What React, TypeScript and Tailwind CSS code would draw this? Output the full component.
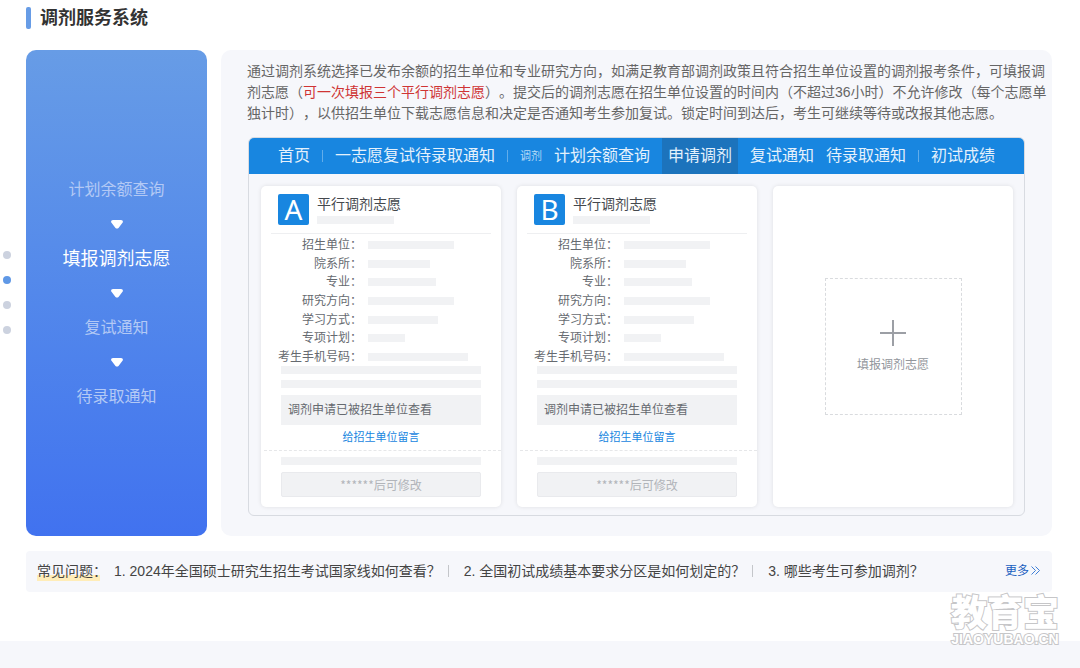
import { Fragment } from 'react';
import clsx from 'clsx';

const steps = ['计划余额查询', '填报调剂志愿', '复试通知', '待录取通知'];

// full-width punctuation
const COLON = '\uff1a';
const COMMA = '\uff0c';
const OPEN = '\uff08';
const CLOSE = '\uff09';
const QUESTION = '\uff1f';

const fields = [
  { label: '招生单位', bar: 'w-[86px]' },
  { label: '院系所', bar: 'w-[62px]' },
  { label: '专业', bar: 'w-[68px]' },
  { label: '研究方向', bar: 'w-[86px]' },
  { label: '学习方式', bar: 'w-[70px]' },
  { label: '专项计划', bar: 'w-[37px]' },
  { label: '考生手机号码', bar: 'w-[100px]' },
];

const questions = [
  `1. 2024年全国硕士研究生招生考试国家线如何查看${QUESTION}`,
  `2. 全国初试成绩基本要求分区是如何划定的${QUESTION}`,
  `3. 哪些考生可参加调剂${QUESTION}`,
];

const introStart = `通过调剂系统选择已发布余额的招生单位和专业研究方向${COMMA}如满足教育部调剂政策且符合招生单位设置的调剂报考条件${COMMA}可填报调剂志愿${OPEN}`;
const introEnd = `${CLOSE}。提交后的调剂志愿在招生单位设置的时间内${OPEN}不超过36小时${CLOSE}不允许修改${OPEN}每个志愿单独计时${CLOSE}${COMMA}以供招生单位下载志愿信息和决定是否通知考生参加复试。锁定时间到达后${COMMA}考生可继续等待或改报其他志愿。`;

function PageDots() {
  return (
    <nav aria-label="分页" className="absolute left-[3px] top-[251px] flex flex-col gap-[17px]">
      {steps.map((step, i) => (
        <button
          key={step}
          type="button"
          aria-label={step}
          className={clsx('size-2 rounded-full', i === 1 ? 'bg-[#5f98e6]' : 'bg-[#ccd2df]')}
        />
      ))}
    </nav>
  );
}

function StepArrow() {
  return (
    <span className="flex h-[35px] items-center">
      <svg width="12" height="9" viewBox="0 0 12 9" fill="#fff" aria-hidden="true">
        <path d="M2 0h8c1.800 0 2.500 1.900 1.300 3.100L7.500 7.900c-.8 .9-2.200 .9-3 0L.7 3.100C-.5 1.900 .2 0 2 0z" />
      </svg>
    </span>
  );
}

function Sidebar() {
  return (
    <aside className="flex w-[181px] shrink-0 flex-col items-center justify-center rounded-[10px] bg-linear-to-b from-[#679ce6] to-[#4172ef]">
      {steps.map((step, i) => (
        <Fragment key={step}>
          {i > 0 && <StepArrow />}
          <a
            href="#"
            className={clsx('leading-[34px]', i === 1 ? 'text-lg text-white' : 'text-base text-[#b3c9f5]')}
          >
            {step}
          </a>
        </Fragment>
      ))}
    </aside>
  );
}

function NavLine() {
  return <span className="h-3 w-px bg-[#62adea]" />;
}

function SystemNav() {
  return (
    <nav className="flex h-9 items-center gap-3 whitespace-nowrap bg-[#1886e0] pl-[29px] text-base text-[#e4f1fc]">
      <a href="#">首页</a>
      <NavLine />
      <a href="#">一志愿复试待录取通知</a>
      <NavLine />
      <span className="text-[11px] text-[#b5d9f6]">调剂</span>
      <a href="#">计划余额查询</a>
      <a href="#" className="flex h-full items-center bg-[#1c73bc] px-[6px]">
        申请调剂
      </a>
      <a href="#">复试通知</a>
      <a href="#">待录取通知</a>
      <NavLine />
      <a href="#">初试成绩</a>
    </nav>
  );
}

function Bar({ className }: { className?: string }) {
  return <div className={clsx('h-2 bg-[#f1f2f4]', className)} />;
}

function WishCard({ letter }: { letter: string }) {
  return (
    <article className="rounded-[5px] bg-white pb-[10px] text-xs text-[#666a70] shadow-[0_0_4px_rgba(0,0,0,0.1)]">
      <header className="mx-[10px] flex h-12 gap-2 border-b border-[#eeeff1] pl-[7px] pt-2">
        <div className="flex size-[31px] items-center justify-center rounded-[2px] bg-[#1886e0] pb-px font-['Noto_Sans',sans-serif] text-[28px] leading-none text-white">
          {letter}
        </div>
        <div>
          <h3 className="text-sm leading-5 text-[#44484d]">平行调剂志愿</h3>
          <Bar className="mt-[2px] w-[77px]" />
        </div>
      </header>

      <dl className="mt-[2px] flex h-[130px] flex-col justify-between pl-[17px]">
        {fields.map((field) => (
          <div key={field.label} className="flex items-center gap-[6px]">
            <dt className="w-[84px] shrink-0 whitespace-nowrap text-right leading-[18px]">
              {field.label + COLON}
            </dt>
            <dd>
              <Bar className={field.bar} />
            </dd>
          </div>
        ))}
      </dl>

      <div className="mx-5">
        <Bar />
        <Bar className="mt-[6px]" />
        <p className="mt-[7px] bg-[#f1f2f4] pl-[7px] leading-[30px]">调剂申请已被招生单位查看</p>
        <a href="#" className="block text-center text-[11px] leading-[25px] text-[#1886e0]">
          给招生单位留言
        </a>
      </div>
      <div className="ml-[3px] border-t border-dashed border-[#e6e7e9]" />
      <div className="mx-5 mt-[6px]">
        <Bar />
        <button
          type="button"
          className="mt-[7px] block h-[25px] w-full rounded-[2px] border border-[#e9eaed] bg-[#f1f2f4] font-['Noto_Sans_CJK_SC',sans-serif] text-[#b2b5ba]"
        >
          ******后可修改
        </button>
      </div>
    </article>
  );
}

function AddCard() {
  return (
    <div className="flex items-center justify-center rounded-[5px] bg-white shadow-[0_0_4px_rgba(0,0,0,0.1)]">
      <button
        type="button"
        className="flex size-[137px] flex-col items-center justify-center gap-[10px] border border-dashed border-[#d9dbde] text-xs leading-[18px] text-[#92969c]"
      >
        <svg width="26" height="26" viewBox="0 0 26 26" stroke="#9c9fa5" strokeWidth="2" aria-hidden="true">
          <path d="M13 0v26M0 13h26" />
        </svg>
        填报调剂志愿
      </button>
    </div>
  );
}

function Faq() {
  return (
    <section className="mt-[15px] flex h-[41px] items-center whitespace-nowrap rounded bg-[#f6f7fb] pb-[2px] pl-[11px] pr-3 text-sm leading-5 text-[#444]">
      <h2 className="mr-[14px] bg-linear-to-t from-[#ffedb8] from-30% to-transparent to-30% [font-feature-settings:'halt']">
        {'常见问题' + COLON}
      </h2>
      {questions.map((question, i) => (
        <Fragment key={question}>
          {i > 0 && <span className="ml-[7px] mr-[15px] h-3 w-px bg-[#c4c6ca]" />}
          <a href="#">{question}</a>
        </Fragment>
      ))}
      <a href="#" className="ml-auto flex items-center gap-[2px] text-xs text-[#1a5fc0]">
        更多
        <svg width="9" height="9" viewBox="0 0 9 9" fill="none" stroke="#3f7fd6" aria-hidden="true">
          <path d="M.5 .5l4 4-4 4M4.500 .5l4 4-4 4" />
        </svg>
      </a>
    </section>
  );
}

function Watermark() {
  return (
    <div className="absolute right-[21px] top-[595px] text-center font-bold text-white [-webkit-text-stroke:2px_#c6c6c8] [paint-order:stroke_fill]">
      <div className="text-[36px] font-black leading-[37px]">教育宝</div>
      <div className="text-sm leading-[14px]">JIAOYUBAO.CN</div>
    </div>
  );
}

export default function App() {
  return (
    <div className="relative flex min-h-screen flex-col overflow-hidden bg-white font-['Liberation_Sans','Noto_Sans_CJK_SC',sans-serif] [text-spacing-trim:space-all]">
      <PageDots />

      <main className="pl-[26px] pr-7 pt-[7px]">
        <h1 className="flex h-[22px] items-center gap-[9px] text-lg font-bold text-[#333]">
          <span className="h-full w-[5px] rounded-[2px] bg-[#679ce6]" />
          调剂服务系统
        </h1>

        <div className="mt-[21px] flex gap-[14px]">
          <Sidebar />

          <section className="min-w-0 flex-1 rounded-[10px] bg-[#f6f7fb] pb-5 pt-[11px]">
            <p className="ml-[26px] mr-[3px] text-sm leading-[21px] text-[#666]">
              {introStart}
              <em className="not-italic text-[#cf3434]">可一次填报三个平行调剂志愿</em>
              {introEnd}
            </p>

            <div className="mx-[27px] mt-[13px] overflow-hidden rounded-[6px] border border-[#d8dbe1]">
              <SystemNav />
              <div className="grid grid-cols-3 gap-4 pb-2 pl-3 pr-[11px] pt-3">
                <WishCard letter="A" />
                <WishCard letter="B" />
                <AddCard />
              </div>
            </div>
          </section>
        </div>

        <Faq />
      </main>

      <div className="mt-[49px] flex-1 bg-[#f6f7fb]" />
      <Watermark />
    </div>
  );
}
